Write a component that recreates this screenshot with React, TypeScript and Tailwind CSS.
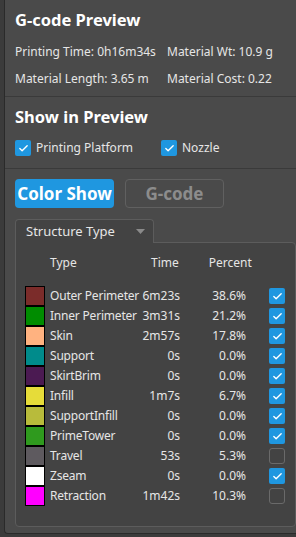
import { Check } from "lucide-react";

type Row = { name: string; color: string; time: string; percent: string; on: boolean };

const ROWS: Row[] = [
  { name: "Outer Perimeter", color: "#7b2c2a", time: "6m23s", percent: "38.6%", on: true },
  { name: "Inner Perimeter", color: "#008c00", time: "3m31s", percent: "21.2%", on: true },
  { name: "Skin", color: "#ffb280", time: "2m57s", percent: "17.8%", on: true },
  { name: "Support", color: "#008b8b", time: "0s", percent: "0.0%", on: true },
  { name: "SkirtBrim", color: "#4b1a52", time: "0s", percent: "0.0%", on: true },
  { name: "Infill", color: "#e6dc39", time: "1m7s", percent: "6.7%", on: true },
  { name: "SupportInfill", color: "#b8bb3b", time: "0s", percent: "0.0%", on: true },
  { name: "PrimeTower", color: "#2f9a1e", time: "0s", percent: "0.0%", on: true },
  { name: "Travel", color: "#5e5a5f", time: "53s", percent: "5.3%", on: false },
  { name: "Zseam", color: "#ffffff", time: "0s", percent: "0.0%", on: true },
  { name: "Retraction", color: "#ff00ff", time: "1m42s", percent: "10.3%", on: false },
];

const Box = ({ on }: { on: boolean }) =>
  on ? (
    <span className="flex h-4 w-4 items-center justify-center rounded-[2px] bg-[#1f97e0]">
      <Check size={11} strokeWidth={3} color="#ffffff" />
    </span>
  ) : (
    <span className="block h-4 w-4 rounded-[3px] border border-[#6a6a6a]" />
  );

const App = () => {
  return (
    <div className="flex h-[537px] w-[296px] overflow-hidden bg-[#3b3b3b] font-['Noto_Sans',sans-serif] text-[12px] text-[#e6e6e6]">
      <div className="ml-1 h-[534px] flex-1 rounded-bl-[4px] border-b border-l border-[#2a2a2a] bg-[#4a4a4a]">
        <div className="px-[10px] pt-[7px] pb-[8px]">
          <div className="text-[16.5px] font-bold leading-[26px] text-white">G-code Preview</div>
          <div className="mt-[9px] grid grid-cols-[152px_1fr] gap-y-[8px] leading-[19px]">
            <span>Printing Time: 0h16m34s</span>
            <span>Material Wt: 10.9 g</span>
            <span>Material Length: 3.65 m</span>
            <span>Material Cost: 0.22</span>
          </div>
        </div>
        <div className="border-t border-[#3a3a3a] px-[10px] pt-[7px] pb-[11px]">
          <div className="text-[16.5px] font-bold leading-[26px] text-white">Show in Preview</div>
          <div className="mt-[9px] flex h-[18px] items-center">
            <Box on />
            <span className="ml-[5px] w-[125px]">Printing Platform</span>
            <Box on />
            <span className="ml-[5px]">Nozzle</span>
          </div>
        </div>
        <div className="border-t border-[#3a3a3a] pl-[10px] pt-[10px]">
          <div className="flex gap-[11px]">
            <button className="h-[29px] w-[99px] rounded-[4px] bg-[#1f97e0] text-[17px] font-bold text-white">
              Color Show
            </button>
            <button className="h-[29px] w-[99px] rounded-[4px] border border-[#606060] text-[17px] font-bold text-[#8c8c8c]">
              G-code
            </button>
          </div>
          <div className="mt-[11px] flex">
            <div className="relative z-10 -mb-px flex h-[24px] w-[139px] items-center rounded-t-[4px] border border-b-0 border-[#5c5c5c] bg-[#434343] pl-[10px] text-[13px]">
              Structure Type
              <svg className="ml-[21px]" width="9" height="6" viewBox="0 0 9 6">
                <path d="M0 0h9L4.5 5z" fill="#8a8a8a" />
              </svg>
            </div>
          </div>
          <div className="h-[285px] rounded-tr-[4px] rounded-b-[4px] border border-[#5c5c5c] bg-[#434343] pl-[9px]">
            <div className="mt-[10px] flex h-[20px] items-center">
              <span className="ml-[25px] w-[101px]">Type</span>
              <span>Time</span>
              <span className="ml-[30px]">Percent</span>
            </div>
            <div className="mt-[13px] flex flex-col">
              {ROWS.map((row) => (
                <div key={row.name} className="flex h-[20px] items-center">
                  <span
                    className="h-[20px] w-[20px] border border-black"
                    style={{ backgroundColor: row.color }}
                  />
                  <span className="ml-[5px] w-[92px] whitespace-nowrap tracking-[-0.2px]">{row.name}</span>
                  <span className="w-[38px] text-right">{row.time}</span>
                  <span className="w-[66px] text-right">{row.percent}</span>
                  <span className="ml-[23px]">
                    <Box on={row.on} />
                  </span>
                </div>
              ))}
            </div>
          </div>
        </div>
      </div>
    </div>
  );
};

export default App;
